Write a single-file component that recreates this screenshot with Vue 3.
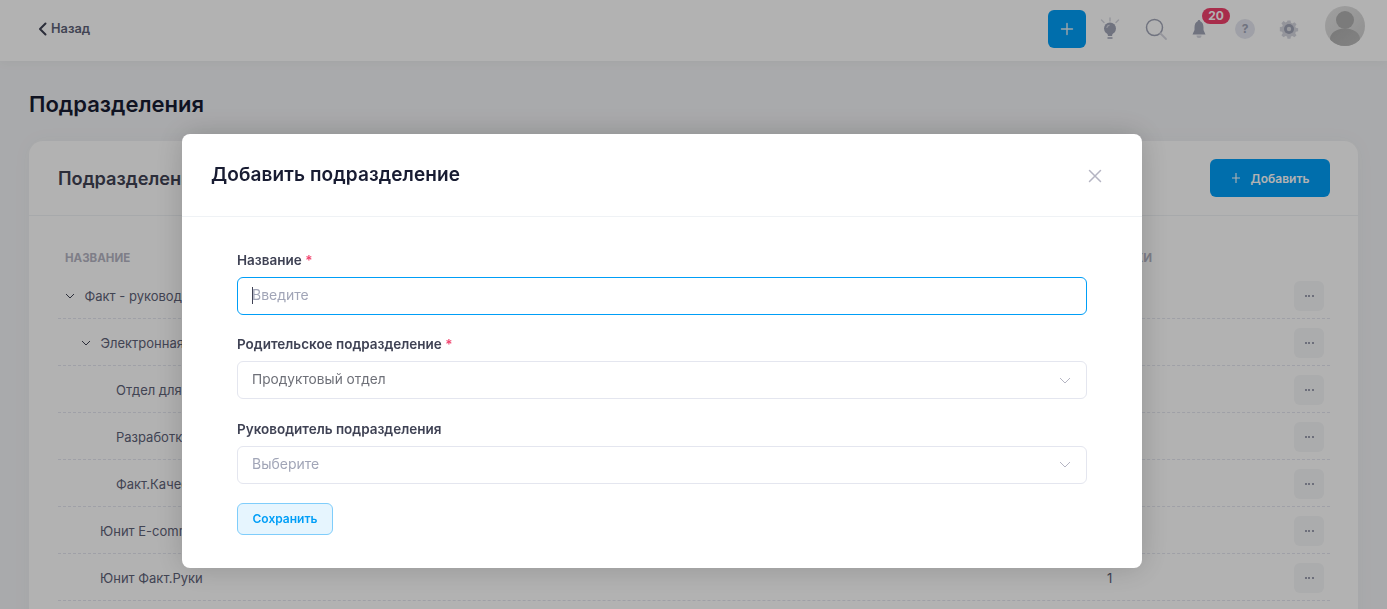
<script setup>
const rows = [
  { name: 'Факт - руководство', level: 0, open: true, count: 2 },
  { name: 'Электронная', level: 1, open: true, count: 4 },
  { name: 'Отдел для сотрудников', level: 2, count: 3 },
  { name: 'Разработка', level: 2, count: 5 },
  { name: 'Факт.Качество', level: 2, count: 2 },
  { name: 'Юнит E-commerce', level: 3, count: 1 },
  { name: 'Юнит Факт.Руки', level: 3, count: 1 }
]
</script>

<template>
  <div class="page">
    <header class="topbar">
      <a class="back">
        <svg width="9" height="14" viewBox="0 0 9 14"><path d="M7.5 1.5 2 7l5.5 5.5" fill="none" stroke="#3f4254" stroke-width="2" stroke-linecap="round" stroke-linejoin="round"/></svg>
        <span>Назад</span>
      </a>
      <div class="actions">
        <button class="add-square">
          <svg width="14" height="14" viewBox="0 0 14 14"><path d="M7 1.500v11M1.500 7h11" stroke="#e8eef2" stroke-width="1.400" stroke-linecap="round"/></svg>
        </button>
        <svg class="ic-bulb" width="24" height="24" viewBox="0 0 24 24">
          <path d="M3.500 3 6 5.500M20.500 3 18 5.500M12 1v3" stroke="#d5d6df" stroke-width="1.400" stroke-linecap="round"/>
          <circle cx="12" cy="11.500" r="6" fill="#a1a5b7"/>
          <path d="M9 15h6l-1 4h-4Z" fill="#a1a5b7"/>
          <path d="M9.500 21h5" stroke="#a1a5b7" stroke-width="1.500"/>
          <path d="M8.800 11a3.300 3.300 0 0 1 2.700-2.800" fill="none" stroke="#d5d6df" stroke-width="1.200"/>
        </svg>
        <svg class="ic-search" width="24" height="24" viewBox="0 0 24 24">
          <circle cx="10.500" cy="10.500" r="8" fill="none" stroke="#a1a5b7" stroke-width="1.500"/>
          <path d="m16.500 16.500 5.500 5.500" stroke="#d5d6df" stroke-width="1.800" stroke-linecap="round"/>
        </svg>
        <div class="bell">
          <svg width="16" height="21" viewBox="0 0 16 21">
            <path d="M8 1c.7 0 1.200.5 1.300 1.200C11.500 3 12.500 5.500 12.500 8.500V11l2 4.500h-13l2-4.500V8.500C3.500 5.500 4.500 3 6.700 2.200 6.800 1.500 7.300 1 8 1Z" fill="#a1a5b7"/>
            <path d="M5.500 16.500h5a2.500 2.500 0 0 1-5 0Z" fill="#d5d6df"/>
          </svg>
          <span class="badge">20</span>
        </div>
        <div class="help">?</div>
        <svg class="ic-gear" width="22" height="22" viewBox="0 0 22 22">
          <path d="M9.300 1.500h3.400l.5 2.600 1.700.7 2.200-1.500 2.400 2.400-1.500 2.200.7 1.700 2.600.5v3.400l-2.600.5-.7 1.700 1.500 2.200-2.400 2.400-2.200-1.500-1.700.7-.5 2.600H9.300l-.5-2.600-1.700-.7-2.200 1.500-2.400-2.400 1.500-2.200-.7-1.700-2.600-.5V8.900l2.600-.5.7-1.700L2.500 4.500l2.400-2.400 2.200 1.500 1.700-.7Z" transform="translate(1.200 1.200) scale(.89)" fill="#d5d6df"/>
          <circle cx="11" cy="11" r="5" fill="#a1a5b7"/>
          <circle cx="11" cy="11" r="2.200" fill="#dcdde3"/>
        </svg>
        <svg class="avatar" width="40" height="40" viewBox="0 0 40 40">
          <defs>
            <clipPath id="av"><circle cx="20" cy="20" r="20"/></clipPath>
            <linearGradient id="avbg" x1="0" y1="0" x2="1" y2="1"><stop offset="0" stop-color="#e4e4e4"/><stop offset="1" stop-color="#cfcfcf"/></linearGradient>
            <linearGradient id="avfg" x1="0" y1="0" x2="1" y2="1"><stop offset="0" stop-color="#aeaeae"/><stop offset="1" stop-color="#bdbdbd"/></linearGradient>
          </defs>
          <g clip-path="url(#av)">
            <rect width="40" height="40" fill="url(#avbg)"/>
            <circle cx="20" cy="14" r="9" fill="#b0b0b0"/>
            <ellipse cx="20" cy="33" rx="15" ry="10.500" fill="url(#avfg)"/>
          </g>
        </svg>
      </div>
    </header>

    <main class="content">
      <h1 class="page-title">Подразделения</h1>
      <section class="card">
        <div class="card-head">
          <h2>Подразделения</h2>
          <button class="add-btn">
            <svg width="10" height="10" viewBox="0 0 10 10"><path d="M5 0v10M1 5h8" stroke="#fff" stroke-width="1.100"/></svg>
            <span>Добавить</span>
          </button>
        </div>
        <div class="table">
          <div class="thead">
            <span>НАЗВАНИЕ</span>
            <span class="th-count">СОТРУДНИКИ</span>
          </div>
          <div v-for="r in rows" :key="r.name" class="row" :class="'lvl' + r.level">
            <div class="name">
              <svg v-if="r.open" class="caret" width="10" height="6" viewBox="0 0 10 6"><path d="M1 1l4 4 4-4" fill="none" stroke="#3f4254" stroke-width="1"/></svg>
              <span>{{ r.name }}</span>
            </div>
            <div class="count">{{ r.count }}</div>
            <button class="dots"><i></i><i></i><i></i></button>
          </div>
        </div>
      </section>
    </main>

    <div class="overlay">
      <div class="modal">
        <div class="modal-head">
          <h3>Добавить подразделение</h3>
          <svg class="close" width="14" height="14" viewBox="0 0 14 14"><path d="M1.500 1.500l11 11M12.500 1.500l-11 11" stroke="#b5b5c3" stroke-width="1.500" stroke-linecap="round"/></svg>
        </div>
        <form class="modal-body" @submit.prevent>
          <div class="field">
            <label>Название <b>*</b></label>
            <div class="control focus"><i class="cursor"></i><span class="ph">Введите</span></div>
          </div>
          <div class="field">
            <label>Родительское подразделение <b>*</b></label>
            <div class="control">
              <span class="val">Продуктовый отдел</span>
              <svg width="12" height="7" viewBox="0 0 12 7"><path d="M1 1l5 5 5-5" fill="none" stroke="#b5b5c3" stroke-width="1"/></svg>
            </div>
          </div>
          <div class="field">
            <label>Руководитель подразделения</label>
            <div class="control">
              <span class="ph">Выберите</span>
              <svg width="12" height="7" viewBox="0 0 12 7"><path d="M1 1l5 5 5-5" fill="none" stroke="#b5b5c3" stroke-width="1"/></svg>
            </div>
          </div>
          <button class="save">Сохранить</button>
        </form>
      </div>
    </div>
  </div>
</template>

<style>
html, body { margin: 0; overflow: hidden; }
</style>

<style scoped>
* { box-sizing: border-box; }
.page {
  height: 100vh;
  overflow: hidden;
  background: #f3f4f6;
  font-family: Inter, "Noto Sans", sans-serif;
  color: #3f4254;
}
button { font-family: inherit; border: 0; }
.topbar {
  height: 61px;
  background: #fff;
  box-shadow: 0 2px 10px rgba(0,0,0,.04);
  display: flex;
  align-items: center;
  justify-content: space-between;
  padding: 0 22px 4px 38px;
}
.back { display: flex; align-items: center; gap: 4px; font-size: 12.800px; font-weight: 600; color: #5e6278; }
.actions { display: flex; align-items: center; height: 40px; }
.add-square {
  width: 38px; height: 38px; border-radius: 6px; background: #009ef7;
  display: flex; align-items: center; justify-content: center; padding: 0; margin-right: 12px;
}
.ic-bulb { margin-right: 22px; margin-top: 1px; }
.ic-search { margin-right: 23px; margin-top: 0; }
.bell { position: relative; width: 16px; height: 21px; margin-right: 28px; margin-top: 2px; }
.badge {
  position: absolute; left: 11px; top: -11px; width: 28px; height: 16px; border-radius: 8px;
  background: #f1416c; color: #fff; font-size: 12px; font-weight: 700; line-height: 16px; text-align: center;
}
.help {
  width: 20px; height: 20px; border-radius: 50%; background: #e4e6ef; color: #a1a5b7;
  font-size: 12px; font-weight: 700; line-height: 20px; text-align: center; margin-right: 23px; margin-top: 1px;
}
.ic-gear { margin-right: 25px; margin-top: 1px; }
.avatar { display: block; margin-top: -5px; }
.content { padding: 0 29px; }
.page-title { margin: 0; padding-top: 30px; font-size: 22px; line-height: 26px; font-weight: 600; color: #181c32; }
.card {
  margin-top: 24px;
  background: #fff;
  border-radius: 14px;
  box-shadow: 0 0 20px rgba(76,87,125,.04);
}
.card-head {
  height: 75px;
  border-bottom: 1px solid #eff2f5;
  display: flex;
  align-items: center;
  justify-content: space-between;
  padding: 0 28px 0 29px;
}
.card-head h2 { margin: 0; font-size: 18.200px; font-weight: 600; color: #3f4254; }
.add-btn {
  width: 120px; height: 38px; border-radius: 6px; background: #009ef7; color: #fff;
  font-size: 12px; font-weight: 600; display: flex; align-items: center; justify-content: center; gap: 10px;
}
.table { padding: 33px 28px 40px 29px; }
.thead {
  position: relative; height: 23px; font-size: 11.500px; font-weight: 700; color: #b5b5c3;
  padding-left: 7px; line-height: 19px;
}
.th-count { position: absolute; right: 178px; top: 0; }
.row {
  height: 47px;
  padding-top: 1px;
  border-bottom: 1px dashed #e4e6ef;
  display: flex;
  align-items: center;
  font-size: 13px;
  color: #5e6278;
  position: relative;
}
.name { flex: 1; display: flex; align-items: center; gap: 9.500px; }
.lvl0 .name { padding-left: 7px; }
.lvl1 .name { padding-left: 23px; }
.lvl2 .name { padding-left: 58px; }
.lvl3 .name { padding-left: 42px; }
.count { position: absolute; left: 1049px; }
.dots {
  width: 30px; height: 30px; border-radius: 6px; background: #f5f6f8; padding: 0;
  display: flex; align-items: center; justify-content: center; gap: 1.500px; margin-right: 6px;
}
.dots i { width: 2px; height: 2px; border-radius: 50%; background: #7e8299; }
.overlay {
  position: fixed; inset: 0;
  background: rgba(0,0,0,.3);
  display: flex; justify-content: center; align-items: flex-start;
  padding: 134px 63px 0 0;
}
.modal {
  width: 960px; background: #fff; border-radius: 8px;
  box-shadow: 0 0 30px rgba(0,0,0,.18);
}
.modal-head {
  height: 83px; border-bottom: 1px solid #eff2f5;
  display: flex; align-items: center; justify-content: space-between;
  padding: 0 40px 2px 29px;
}
.modal-head h3 { margin: 0; font-size: 19px; font-weight: 600; color: #181c32; letter-spacing: .1px; }
.close { margin-top: 3px; }
.modal-body { padding: 33.800px 55px 33px; }
.field + .field { margin-top: 20.600px; }
label { display: block; font-size: 13.500px; line-height: 19.500px; margin-bottom: 6.400px; font-weight: 600; color: #3f4254; }
label b { color: #f1416c; font-weight: 600; }
.control {
  height: 38px; border: 1px solid #e4e6ef; border-radius: 6px;
  display: flex; align-items: center; justify-content: space-between;
  padding: 0 15px 2px 14px; font-size: 14px; position: relative;
}
.control svg { margin-top: 2px; }
.control.focus { border-color: #009ef7; justify-content: flex-start; }
.cursor { width: 1px; height: 17px; background: #3f4254; margin-right: -1px; margin-top: 2px; }
.ph { color: #a1a5b7; }
.val { color: #6e7078; font-size: 13.700px; }
.save {
  display: block; width: 96px; height: 32px; border-radius: 6px; margin-top: 19.300px;
  background: #e6f5fe; border: 1px solid #7fcdfb; color: #009ef7;
  font-size: 12px; font-weight: 600; padding: 0;
}
</style>
